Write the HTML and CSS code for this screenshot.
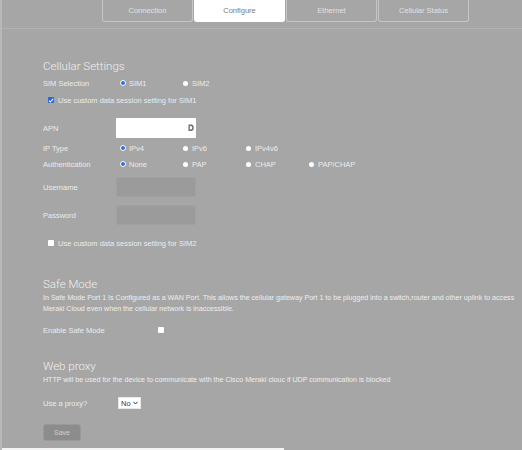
FILE: index.html
```html
<!DOCTYPE html>
<html>
<head>
<meta charset="utf-8">
<link rel="stylesheet" href="styles.css">
</head>
<body>
<div class="page">
  <div class="topbar">
    <nav class="tabs">
      <div class="tab">Connection</div>
      <div class="tab active">Configure</div>
      <div class="tab">Ethernet</div>
      <div class="tab">Cellular Status</div>
    </nav>
  </div>

  <section class="cellular">
    <h2 class="heading">Cellular Settings</h2>
    <div class="row">
      <span class="label">SIM Selection</span>
      <div class="options">
        <span class="opt"><span class="radio on"></span>SIM1</span>
        <span class="opt"><span class="radio"></span>SIM2</span>
      </div>
    </div>
    <div class="row check-row">
      <span class="check on"><svg viewBox="0 0 8 8" width="7" height="7"><path d="M1.3 4.2 L3.2 6 L6.8 1.8" fill="none" stroke="#fff" stroke-width="1.4"/></svg></span>
      <span>Use custom data session setting for SIM1</span>
    </div>
    <div class="row field-row apn">
      <span class="label">APN</span>
      <div class="input white">
        <svg class="keyicon" viewBox="0 0 6 8" width="6" height="8"><path d="M0.5 0.5 H3 A2.5 3 0 0 1 3 7 H0.5 Z M1.8 2 V5.6 H2.8 A1.5 1.8 0 0 0 2.8 2 Z" fill="#6b6b6b" fill-rule="evenodd"/></svg>
      </div>
    </div>
    <div class="row ip">
      <span class="label">IP Type</span>
      <div class="options">
        <span class="opt"><span class="radio on"></span>IPv4</span>
        <span class="opt"><span class="radio"></span>IPv6</span>
        <span class="opt"><span class="radio"></span>IPv4v6</span>
      </div>
    </div>
    <div class="row">
      <span class="label">Authentication</span>
      <div class="options">
        <span class="opt"><span class="radio on"></span>None</span>
        <span class="opt"><span class="radio"></span>PAP</span>
        <span class="opt"><span class="radio"></span>CHAP</span>
        <span class="opt"><span class="radio"></span>PAP/CHAP</span>
      </div>
    </div>
    <div class="row field-row user">
      <span class="label">Username</span>
      <div class="input grey"></div>
    </div>
    <div class="row field-row pass">
      <span class="label">Password</span>
      <div class="input grey"></div>
    </div>
    <div class="row check-row sim2">
      <span class="check"></span>
      <span>Use custom data session setting for SIM2</span>
    </div>
  </section>

  <section class="safe">
    <h2 class="heading">Safe Mode</h2>
    <p class="desc">In Safe Mode Port 1 Is Configured as a WAN Port. This allows the cellular gateway Port 1 to be plugged into a switch,router and other uplink to access Meraki Cloud even when the cellular network is inaccessible.</p>
    <div class="row safe-row">
      <span class="label wide">Enable Safe Mode</span>
      <span class="check"></span>
    </div>
  </section>

  <section class="proxy">
    <h2 class="heading">Web proxy</h2>
    <p class="desc">HTTP will be used for the device to communicate with the Cisco Meraki clouc if UDP communication is blocked</p>
    <div class="row proxy-row">
      <span class="label">Use a proxy?</span>
      <span class="select">No<svg viewBox="0 0 6 4" width="5" height="4"><path d="M0.5 0.5 L3 3.2 L5.5 0.5" fill="none" stroke="#333" stroke-width="1.2"/></svg></span>
    </div>
    <button class="save">Save</button>
  </section>
  <div class="bottomline"></div>
</div>
</body>
</html>
```
FILE: styles.css
```css
html, body {
  margin: 0;
  padding: 0;
  background: #a6a6a6;
}
body {
  font-family: "Liberation Sans", Arial, sans-serif;
  color: #ececec;
  width: 522px;
  height: 450px;
  overflow: hidden;
}
.page {
  position: relative;
  height: 450px;
  border-left: 2px solid #b8b8b8;
  box-sizing: border-box;
}
.topbar {
  height: 28px;
  border-bottom: 1px solid #b3b3b3;
  box-sizing: content-box;
}
.tabs {
  display: flex;
  padding-left: 100px;
  gap: 1px;
}
.tab {
  width: 89px;
  height: 21px;
  border: 1px solid #c6c6c6;
  border-top: none;
  border-radius: 0 0 3px 3px;
  display: flex;
  align-items: center;
  justify-content: center;
  font-size: 7.5px;
  color: #e2e2e2;
}
.tab.active {
  background: #fff;
  color: #7a7a7a;
  border-color: #fff;
}
section {
  padding-left: 41px;
}
.heading {
  margin: 0;
  font-family: Roboto, "Liberation Sans", sans-serif;
  font-weight: 300;
  font-size: 11.5px;
  line-height: 16px;
  height: 16px;
  color: #f0f0f0;
}
.cellular .heading { margin-top: 29px; }
.row {
  display: flex;
  align-items: center;
  height: 16px;
  font-size: 7.5px;
}
.cellular .heading + .row { margin-top: 1px; }
.label {
  width: 73px;
  flex: none;
}
.label.wide { width: 115px; }
.options { display: flex; padding-left: 4px; }
.opt {
  width: 63px;
  display: flex;
  align-items: center;
}
.radio {
  width: 5px;
  height: 5px;
  border-radius: 50%;
  background: #fff;
  margin-right: 4px;
  flex: none;
}
.radio.on {
  width: 4px;
  height: 4px;
  background: #2f6fe0;
  border: 1.5px solid #fff;
  margin-right: 3px;
}
.check-row { padding-left: 5px; margin-top: 1px; }
.check {
  width: 6px;
  height: 6px;
  background: #fff;
  border-radius: 1px;
  margin-right: 4px;
  display: flex;
  align-items: center;
  justify-content: center;
  flex: none;
}
.check.on { background: #2a66d8; }
.field-row { height: 20px; }
.apn { margin-top: 10px; }
.ip { margin-top: 2px; }
.user { margin-top: 5px; }
.pass { margin-top: 8px; }
.sim2 { margin-top: 10px; }
.input {
  width: 80px;
  height: 20px;
  box-sizing: border-box;
  display: flex;
  align-items: center;
  justify-content: flex-end;
  padding-right: 2px;
}
.input.white { background: #fff; }
.input.grey { background: #9b9b9b; border: 1px solid #a1a1a1; }
.safe .heading { margin-top: 25px; }
.desc {
  margin: 1px 0 0;
  font-size: 7.1px;
  line-height: 11px;
  color: #eeeeee;
  width: 480px;
}
.safe-row { margin-top: 7px; }
.proxy .heading { margin-top: 20px; }
.proxy .desc { margin-top: 1px; }
.proxy-row { margin-top: 9px; }
.select {
  margin-left: 2px;
  height: 12px;
  width: 23px;
  box-sizing: border-box;
  background: #fff;
  border: 1px solid #e8e8e8;
  color: #333;
  font-size: 7.5px;
  display: flex;
  align-items: center;
  justify-content: space-between;
  padding: 0 2px 0 2px;
}
.save {
  margin-top: 13px;
  display: block;
  width: 38px;
  height: 17px;
  background: #8c8c8c;
  border: 1px solid #999;
  border-radius: 3px;
  color: #cfcfcf;
  font-family: "Liberation Sans", Arial, sans-serif;
  font-size: 7px;
  padding: 0;
}
.bottomline {
  position: absolute;
  left: 0;
  bottom: 0;
  width: 282px;
  height: 2px;
  background: #f4f4f4;
}
```
